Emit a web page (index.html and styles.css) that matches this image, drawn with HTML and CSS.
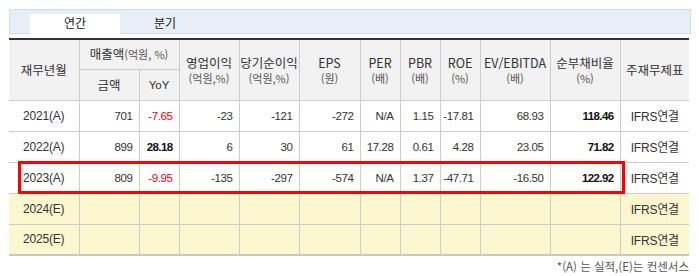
FILE: index.html
```html
<!DOCTYPE html>
<html lang="ko">
<head>
<meta charset="utf-8">
<link rel="stylesheet" href="styles.css">
</head>
<body>
<div class="wrap">
  <div class="tabs">
    <div class="tab active">연간</div>
    <div class="tab">분기</div>
  </div>
  <div class="tablebox">
    <table class="fin">
      <colgroup>
        <col style="width:70px"><col style="width:60px"><col style="width:40px"><col style="width:60px"><col style="width:60px"><col style="width:61px"><col style="width:40px"><col style="width:40px"><col style="width:40px"><col style="width:70px"><col style="width:70px"><col style="width:69px">
      </colgroup>
      <thead>
        <tr class="h1">
          <th rowspan="2" class="first">재무년월</th>
          <th colspan="2">매출액<span class="unit">(억원, %)</span></th>
          <th rowspan="2"><span class="top">영업이익</span><span class="sub">(억원,%)</span></th>
          <th rowspan="2"><span class="top">당기순이익</span><span class="sub">(억원,%)</span></th>
          <th rowspan="2"><span class="top">EPS</span><span class="sub">(원)</span></th>
          <th rowspan="2"><span class="top">PER</span><span class="sub">(배)</span></th>
          <th rowspan="2"><span class="top">PBR</span><span class="sub">(배)</span></th>
          <th rowspan="2"><span class="top">ROE</span><span class="sub">(%)</span></th>
          <th rowspan="2"><span class="top">EV/EBITDA</span><span class="sub">(배)</span></th>
          <th rowspan="2"><span class="top">순부채비율</span><span class="sub">(%)</span></th>
          <th rowspan="2" class="last">주재무제표</th>
        </tr>
        <tr class="h2">
          <th>금액</th>
          <th class="yoy">YoY</th>
        </tr>
      </thead>
      <tbody>
        <tr>
          <td class="first c">2021(A)</td><td>701</td><td class="red">-7.65</td><td>-23</td><td>-121</td><td>-272</td><td>N/A</td><td>1.15</td><td>-17.81</td><td>68.93</td><td class="b">118.46</td><td class="last c">IFRS연결</td>
        </tr>
        <tr>
          <td class="first c">2022(A)</td><td>899</td><td class="b">28.18</td><td>6</td><td>30</td><td>61</td><td>17.28</td><td>0.61</td><td>4.28</td><td>23.05</td><td class="b">71.82</td><td class="last c">IFRS연결</td>
        </tr>
        <tr>
          <td class="first c">2023(A)</td><td>809</td><td class="red">-9.95</td><td>-135</td><td>-297</td><td>-574</td><td>N/A</td><td>1.37</td><td>-47.71</td><td>-16.50</td><td class="b">122.92</td><td class="last c">IFRS연결</td>
        </tr>
        <tr class="est">
          <td class="first c">2024(E)</td><td></td><td></td><td></td><td></td><td></td><td></td><td></td><td></td><td></td><td></td><td class="last c">IFRS연결</td>
        </tr>
        <tr class="est">
          <td class="first c">2025(E)</td><td></td><td></td><td></td><td></td><td></td><td></td><td></td><td></td><td></td><td></td><td class="last c">IFRS연결</td>
        </tr>
      </tbody>
    </table>
    <div class="highlight"></div>
  </div>
  <div class="note">*(A) 는 실적,(E)는 컨센서스</div>
</div>
</body>
</html>
```
FILE: styles.css
```css
html, body {
  margin: 0;
  padding: 0;
  background: #fff;
}
body {
  font-family: "Liberation Sans", "Noto Sans CJK KR", sans-serif;
  color: #333;
}
.wrap {
  padding: 9px 10px 0 9px;
  width: 680px;
}
.tabs {
  display: flex;
  height: 23px;
  background: #e8eef8;
  border: 1px solid #d3dbe6;
  padding-left: 20px;
  width: 660px;
}
.tab {
  width: 90px;
  margin-top: 4px;
  height: 20px;
  line-height: 18px;
  text-align: center;
  font-family: "Noto Sans CJK KR", sans-serif;
  font-size: 12px;
  color: #222;
}
.tab.active {
  background: #fff;
}
.tablebox {
  position: relative;
  margin-top: 4px;
}
.fin {
  border-collapse: collapse;
  table-layout: fixed;
  width: 680px;
  border-top: 2px solid #333;
  border-bottom: 2px solid #c8c8c8;
}
.fin th, .fin td {
  border: 1px solid #cccccc;
  padding: 0;
}
.fin .first { border-left: none; }
.fin .last { border-right: none; }
.fin thead th {
  background: #f2f2f2;
  font-family: "Noto Sans CJK KR", sans-serif;
  font-weight: normal;
  font-size: 12.5px;
  line-height: 16px;
  color: #333;
  text-align: center;
}
.fin tr.h1 { height: 30px; }
.fin tr.h2 { height: 31px; }
.fin .top {
  display: block;
  line-height: 17px;
}
.fin .unit {
  font-size: 11px;
  color: #555;
}
.fin .sub {
  display: block;
  font-size: 11px;
  line-height: 15px;
  color: #555;
}
.fin .yoy {
  font-family: "Liberation Sans", sans-serif;
  font-size: 11.5px;
}
.fin tbody tr { height: 31px; }
.fin tbody td {
  font-size: 11.5px;
  letter-spacing: -0.4px;
  text-align: right;
  padding-right: 6px;
  color: #333;
}
.fin tbody td.c {
  text-align: center;
  padding-right: 0;
  font-size: 12px;
  letter-spacing: -0.2px;
}
.fin td.red { color: #e60012; }
.fin td.b { font-weight: bold; color: #111; letter-spacing: -0.6px; }
.fin tr.est td { background: #fdf7d0; }
.highlight {
  position: absolute;
  left: 9px;
  top: 123px;
  width: 601px;
  height: 27px;
  border: 3px solid #ff0000;
  pointer-events: none;
}
.note {
  text-align: right;
  font-family: "Noto Sans CJK KR", sans-serif;
  font-size: 11.5px;
  color: #555;
  margin-top: 3px;
  line-height: 14px;
}
```
